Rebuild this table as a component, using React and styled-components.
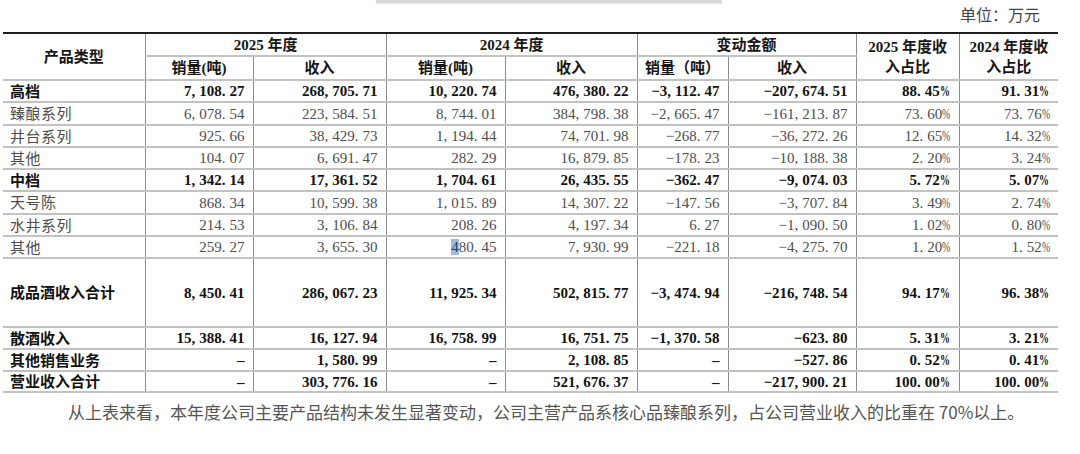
import React from "react";
import styled, { createGlobalStyle } from "styled-components";

const Global = createGlobalStyle`
  html, body { margin: 0; padding: 0; background: #fff; }
  body { font-family: "Liberation Serif", "Noto Sans CJK SC", serif; }
`;

const Page = styled.div`
  width: 1080px;
  height: 454px;
  overflow: hidden;
  background: #fff;
  display: flex;
  flex-direction: column;
`;

const TopStrip = styled.div`
  height: 3px;
  width: 346px;
  margin-left: 376px;
  background: #d9d9d9;
  box-shadow: 0 1px 2px rgba(0, 0, 0, 0.12);
`;

const UnitLine = styled.div`
  height: 29px;
  box-sizing: border-box;
  padding: 1px 40px 0 0;
  display: flex;
  align-items: flex-start;
  justify-content: flex-end;
  font-family: "Noto Sans CJK SC", sans-serif;
  font-size: 16px;
  line-height: 20px;
  color: #444;
`;

const Table = styled.table`
  margin-left: 3px;
  width: 1055px;
  border-collapse: collapse;
  table-layout: fixed;
  border-top: 2px solid #1e1e1e;
  border-bottom: 2px solid #1e1e1e;
`;

const Th = styled.th`
  font-family: "Liberation Serif", "Noto Sans CJK SC", serif;
  font-weight: 700;
  font-size: 15px;
  color: #161616;
  text-align: center;
  padding: 0;
  line-height: 20px;
  border-bottom: 2px solid #c2c2c2;
  border-left: ${(p) => (p.$first ? "none" : "1px solid #8c8c8c")};
`;

const HeadRow = styled.tr`
  height: ${(p) => p.$h}px;
`;

const Row = styled.tr`
  height: ${(p) => p.$h}px;
`;

const Td = styled.td`
  font-family: "Liberation Serif", "Noto Sans CJK SC", serif;
  font-size: 15px;
  line-height: 18px;
  font-weight: ${(p) => (p.$bold ? 700 : 400)};
  color: ${(p) => (p.$bold ? "#121212" : "#4e4e4e")};
  text-align: ${(p) => (p.$label ? "left" : "right")};
  padding: ${(p) => (p.$label ? "0 0 0 7px" : "0 8px 0 0")};
  white-space: nowrap;
  border-bottom: 2px solid #c2c2c2;
  border-left: ${(p) => (p.$label ? "none" : "1px solid #8c8c8c")};
`;

const Label = styled.span`
  font-family: "Noto Sans CJK SC", sans-serif;
  letter-spacing: ${(p) => (p.$bold ? "0" : "0.5px")};
`;

const Punct = styled.span`
  padding-right: 4px;
`;

const Pct = styled.span`
  display: inline-block;
  transform: scaleX(0.66);
  transform-origin: left center;
  margin-right: -4.2px;
`;

const Mark = styled.span`
  background: #9fbbd9;
  color: #24416a;
`;

const Footer = styled.p`
  margin: 8px 0 0 0;
  padding-left: 68px;
  font-family: "Noto Sans CJK SC", sans-serif;
  font-size: 17px;
  line-height: 22px;
  color: #555;
  white-space: nowrap;
`;

const widths = [142, 108, 133, 119, 132, 91, 128, 103, 99];

const rows = [
  { label: "高档", bold: true, h: 22, v: ["7,108.27", "268,705.71", "10,220.74", "476,380.22", "−3,112.47", "−207,674.51", "88.45%", "91.31%"] },
  { label: "臻酿系列", h: 23, v: ["6,078.54", "223,584.51", "8,744.01", "384,798.38", "−2,665.47", "−161,213.87", "73.60%", "73.76%"] },
  { label: "井台系列", h: 22, v: ["925.66", "38,429.73", "1,194.44", "74,701.98", "−268.77", "−36,272.26", "12.65%", "14.32%"] },
  { label: "其他", h: 22, v: ["104.07", "6,691.47", "282.29", "16,879.85", "−178.23", "−10,188.38", "2.20%", "3.24%"] },
  { label: "中档", bold: true, h: 22, v: ["1,342.14", "17,361.52", "1,704.61", "26,435.55", "−362.47", "−9,074.03", "5.72%", "5.07%"] },
  { label: "天号陈", h: 23, v: ["868.34", "10,599.38", "1,015.89", "14,307.22", "−147.56", "−3,707.84", "3.49%", "2.74%"] },
  { label: "水井系列", h: 22, v: ["214.53", "3,106.84", "208.26", "4,197.34", "6.27", "−1,090.50", "1.02%", "0.80%"] },
  { label: "其他", h: 22, mark: 2, v: ["259.27", "3,655.30", "480.45", "7,930.99", "−221.18", "−4,275.70", "1.20%", "1.52%"] },
  { label: "成品酒收入合计", bold: true, h: 69, v: ["8,450.41", "286,067.23", "11,925.34", "502,815.77", "−3,474.94", "−216,748.54", "94.17%", "96.38%"] },
  { label: "散酒收入", bold: true, h: 22, v: ["15,388.41", "16,127.94", "16,758.99", "16,751.75", "−1,370.58", "−623.80", "5.31%", "3.21%"] },
  { label: "其他销售业务", bold: true, h: 22, v: ["–", "1,580.99", "–", "2,108.85", "–", "−527.86", "0.52%", "0.41%"] },
  { label: "营业收入合计", bold: true, h: 21, v: ["–", "303,776.16", "–", "521,676.37", "–", "−217,900.21", "100.00%", "100.00%"] },
];

function Num({ text, mark }) {
  const parts = [];
  const chars = Array.from(text);
  chars.forEach((c, i) => {
    if (c === "," || c === ".") parts.push(<Punct key={i}>{c}</Punct>);
    else if (c === "%") parts.push(<Pct key={i}>{c}</Pct>);
    else if (mark && i === 0) parts.push(<Mark key={i}>{c}</Mark>);
    else parts.push(c);
  });
  return <>{parts}</>;
}

export default function App() {
  return (
    <Page>
      <Global />
      <TopStrip />
      <UnitLine>单位：万元</UnitLine>
      <Table>
        <colgroup>
          {widths.map((w, i) => (
            <col key={i} style={{ width: w }} />
          ))}
        </colgroup>
        <thead>
          <HeadRow $h={23}>
            <Th $first rowSpan={2}>产品类型</Th>
            <Th colSpan={2}>2025 年度</Th>
            <Th colSpan={2}>2024 年度</Th>
            <Th colSpan={2}>变动金额</Th>
            <Th rowSpan={2}>
              2025 年度收
              <br />
              入占比
            </Th>
            <Th rowSpan={2}>
              2024 年度收
              <br />
              入占比
            </Th>
          </HeadRow>
          <HeadRow $h={24}>
            <Th>销量(吨)</Th>
            <Th>收入</Th>
            <Th>销量(吨)</Th>
            <Th>收入</Th>
            <Th>销量（吨）</Th>
            <Th>收入</Th>
          </HeadRow>
        </thead>
        <tbody>
          {rows.map((r, ri) => (
            <Row key={ri} $h={r.h}>
              <Td $label $bold={r.bold}>
                <Label $bold={r.bold}>{r.label}</Label>
              </Td>
              {r.v.map((val, ci) => (
                <Td key={ci} $bold={r.bold}>
                  <Num text={val} mark={r.mark === ci} />
                </Td>
              ))}
            </Row>
          ))}
        </tbody>
      </Table>
      <Footer>
        从上表来看，本年度公司主要产品结构未发生显著变动，公司主营产品系核心品臻酿系列，占公司营业收入的比重在 70%以上。
      </Footer>
    </Page>
  );
}
